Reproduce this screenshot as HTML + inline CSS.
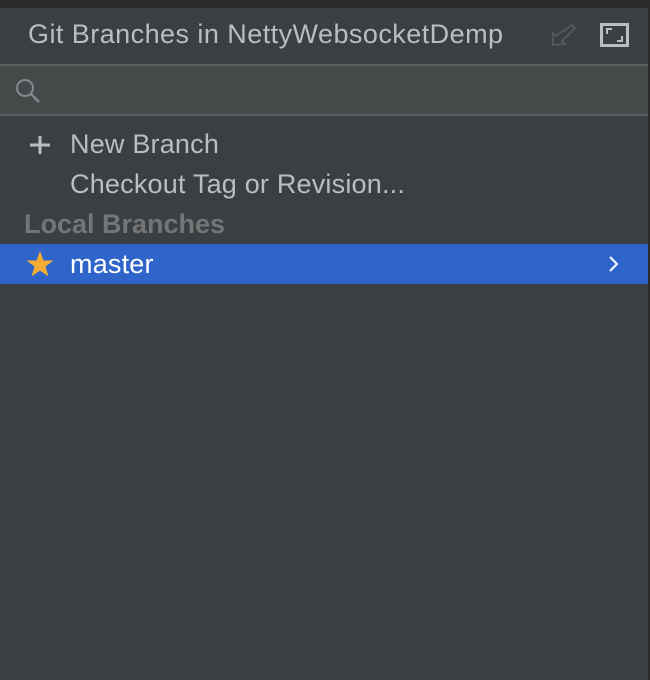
<!DOCTYPE html>
<html><head><style>
*{margin:0;padding:0;box-sizing:border-box}
body{width:650px;height:680px;background:#3c3f41;font-family:"Liberation Sans",sans-serif;position:relative;overflow:hidden}
.top{position:absolute;left:0;top:0;width:650px;height:8px;background:#2b2b2b}
.rs{position:absolute;right:0;top:0;width:2px;height:680px;background:#2b2b2b}
.title{position:absolute;left:28px;top:19px;font-size:27px;color:#bbbdbf;letter-spacing:0.45px}
.l1{position:absolute;left:0;top:64px;width:648px;height:2px;background:#5b5e60}
.search{position:absolute;left:0;top:66px;width:648px;height:48px;background:#46494a}
.l2{position:absolute;left:0;top:114px;width:648px;height:2px;background:#5b5e60}
.t{position:absolute;font-size:27px;color:#bbbdbf;letter-spacing:0.2px}
.sel{position:absolute;left:0;top:244px;width:648px;height:40px;background:#2f65ca}
</style></head><body>
<div class="top"></div><div class="rs"></div>
<div class="title">Git Branches in NettyWebsocketDemp</div>
<svg style="position:absolute;left:550px;top:24px" width="26" height="24" viewBox="0 0 26 24"><path d="M22 1 L25 4 L12 17 L15 20 L3 21 L3 9 L6 12 Z" fill="none" stroke="#555859" stroke-width="2"/></svg>
<svg style="position:absolute;left:600px;top:23px" width="29" height="25"><rect x="1.5" y="1.5" width="26" height="21" fill="none" stroke="#bbbdbf" stroke-width="3"/><path d="M7 11V6H12M17 18H22V13" fill="none" stroke="#bbbdbf" stroke-width="2"/></svg>
<div class="l1"></div><div class="search"></div><div class="l2"></div>
<svg style="position:absolute;left:15px;top:78px" width="26" height="26"><circle cx="10" cy="10" r="8" fill="none" stroke="#7f8b91" stroke-width="2"/><path d="M16 16L24 24" stroke="#7f8b91" stroke-width="2.5"/></svg>
<svg style="position:absolute;left:29px;top:135px" width="22" height="20"><path d="M11 1V19M1 10H21" stroke="#bbbdbf" stroke-width="3"/></svg>
<div class="t" style="left:70px;top:129px">New Branch</div>
<div class="t" style="left:70px;top:169px">Checkout Tag or Revision...</div>
<div class="t" style="left:24px;top:209px;font-weight:bold;color:#737577;letter-spacing:0">Local Branches</div>
<div class="sel"></div>
<svg style="position:absolute;left:26px;top:251px" width="28" height="27" viewBox="0 0 28 27"><path d="M14 0L17.5 9.5H27.5L19.5 15.5L22.5 25.5L14 19.5L5.5 25.5L8.5 15.5L0.5 9.5H10.5Z" fill="#f4ae33"/></svg>
<div class="t" style="left:70px;top:249px;color:#fff">master</div>
<svg style="position:absolute;left:607px;top:255px" width="14" height="18"><path d="M3 2L10 9L3 16" fill="none" stroke="#fff" stroke-width="2"/></svg>
</body></html>
